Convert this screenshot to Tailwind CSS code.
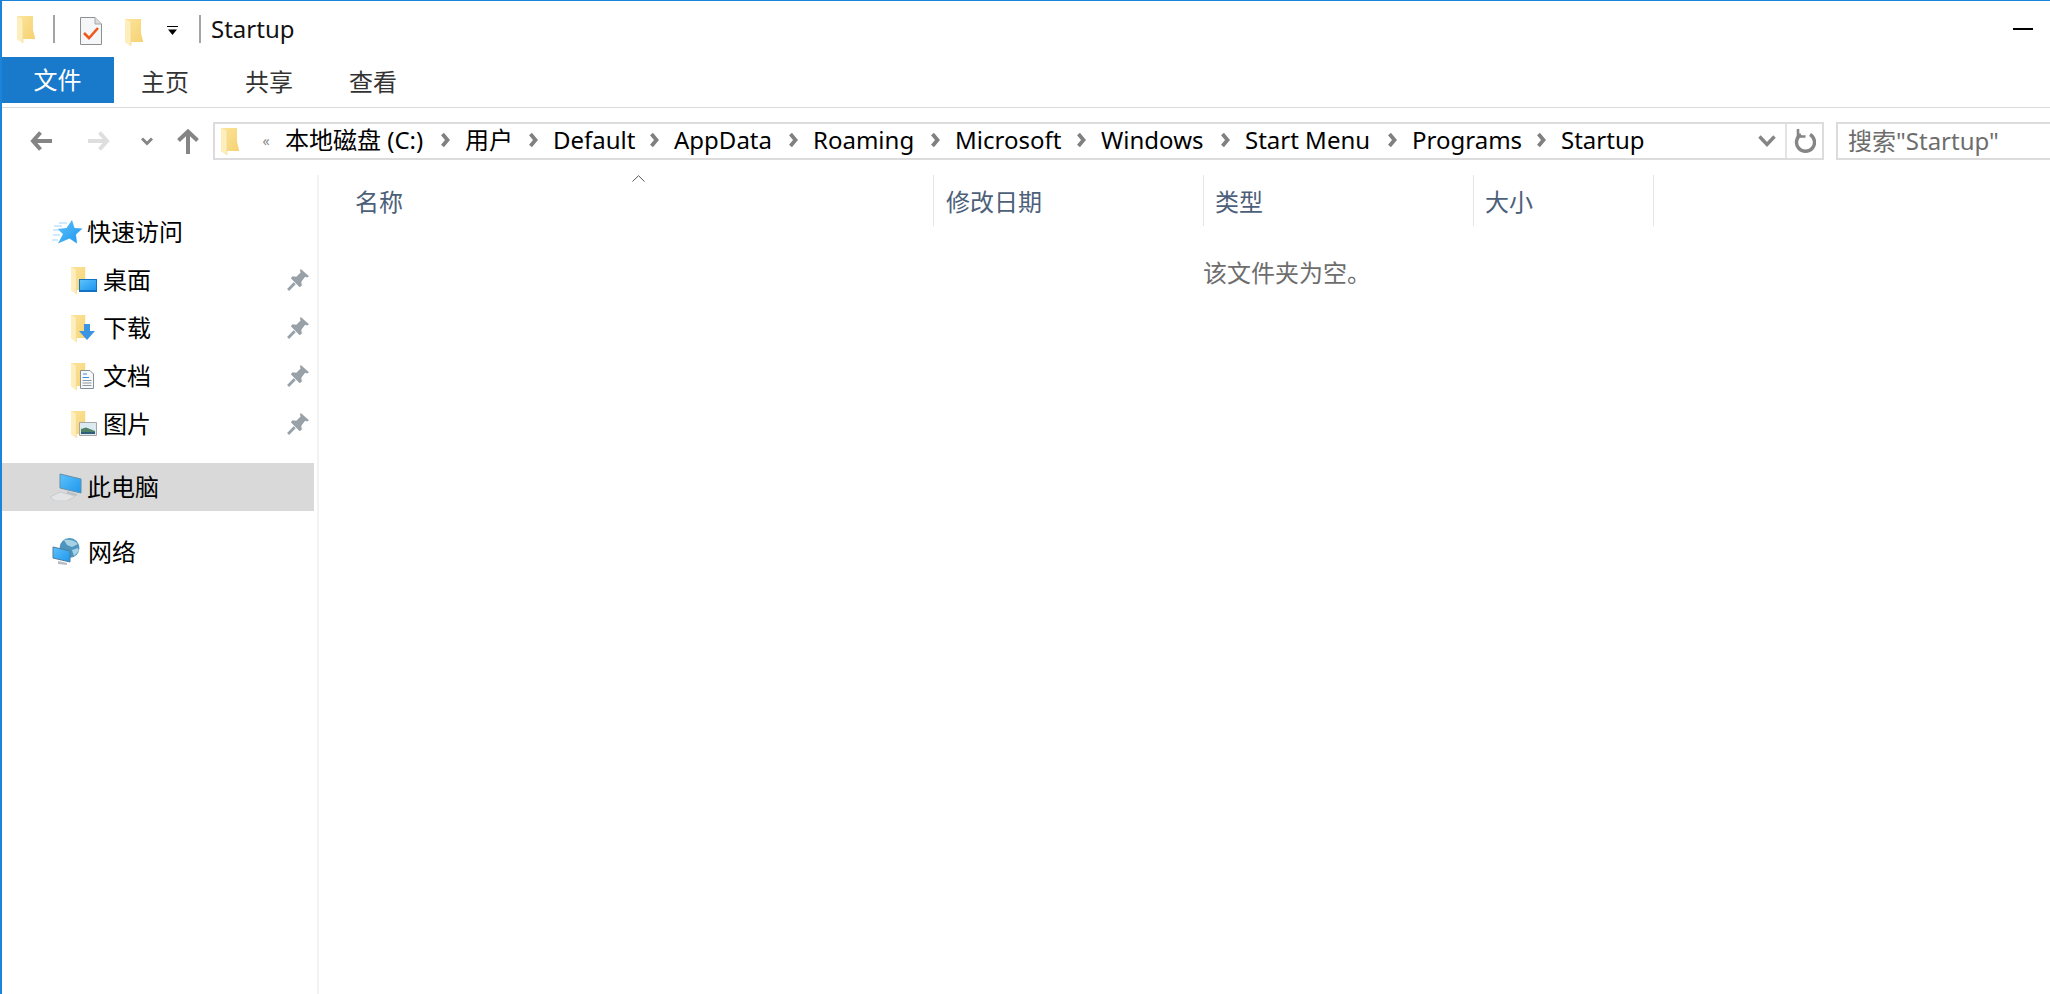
<!DOCTYPE html>
<html lang="zh-CN">
<head>
<meta charset="utf-8">
<script src="https://cdn.jsdelivr.net/npm/@tailwindcss/browser@4"></script>
<title>Startup</title>
</head>
<body class="overflow-hidden bg-white">
<svg class="absolute h-0 w-0" aria-hidden="true">
  <defs>
    <linearGradient id="fg" x1="0" y1="0" x2="1" y2="1"><stop offset="0" stop-color="#fbe59b"/><stop offset="1" stop-color="#f6d06e"/></linearGradient>
    <linearGradient id="bl" x1="0" y1="0" x2="1" y2="1"><stop offset="0" stop-color="#5cc2fb"/><stop offset="1" stop-color="#1f96ee"/></linearGradient>
    <symbol id="folder" viewBox="0 0 18 27" preserveAspectRatio="none">
      <path d="M0 0H16V14L18 22V23H6V27L0 23Z" fill="url(#fg)"/>
      <path d="M0 0L6 3V27L0 23Z" fill="#fdeebb"/>
      <path d="M6 3V27" stroke="#efd68f" stroke-width=".6"/>
    </symbol>
    <symbol id="chev" viewBox="0 0 10 14">
      <path d="M2.5 1L7.5 7L2.5 13" fill="none" stroke="#808080" stroke-width="3.8"/>
    </symbol>
    <symbol id="pin" viewBox="0 0 20 20">
      <path d="M12.5 0L20 6.5L18.3 7.7L16.5 7L13 11.5L13.5 15L11.5 16.5L3.5 8.5L5 6.7L8.5 7L12.5 3L11.7 1.5Z" fill="#98a1a8"/>
      <path d="M7 13L1 19" stroke="#98a1a8" stroke-width="2.6"/>
    </symbol>
  </defs>
</svg>

<div class="flex h-[994px] w-[2050px] flex-col border-l-2 border-t border-[#1b84d8] font-['Noto_Sans','Noto_Sans_CJK_SC',sans-serif] text-[24px] text-black">

  <!-- title bar -->
  <div class="relative flex h-[56px] items-center">
    <svg class="ml-[15px] mb-[-1px] h-[27px] w-[18px]"><use href="#folder"/></svg>
    <div class="ml-[18px] h-[28px] w-[2px] bg-[#a4a4a4]"></div>
    <svg class="ml-[25px] mt-[3px] h-[28px] w-[22px]" viewBox="0 0 22 28">
      <path d="M.5.5H15L21.5 7V27.5H.5Z" fill="#f5f6f7" stroke="#8f8f8f"/>
      <path d="M15 .5V7H21.5" fill="#dcdcdc" stroke="#a8a8a8"/>
      <path d="M4 16L9 21L18 11" fill="none" stroke="#f0591c" stroke-width="2.6"/>
    </svg>
    <svg class="ml-[23px] mt-[6px] h-[27px] w-[18px]"><use href="#folder"/></svg>
    <svg class="ml-[24px] mt-[3px] h-[10px] w-[11px]" viewBox="0 0 11 10">
      <path d="M0 .5H11" stroke="#000"/><path d="M1 3.5H10L5.5 9Z" fill="#000"/>
    </svg>
    <div class="ml-[21px] h-[28px] w-[2px] bg-[#a4a4a4]"></div>
    <span class="ml-[10px] text-[#111]">Startup</span>
    <div class="absolute right-[17px] top-[27px] h-[2px] w-[20px] bg-black"></div>
  </div>

  <!-- ribbon tabs -->
  <div class="flex h-[51px] items-start border-b border-[#dadbdc] text-[#333]">
    <div class="flex h-[46px] w-[112px] items-center justify-center bg-[#1979ca] pr-[1px] text-white">文件</div>
    <div class="flex h-[46px] w-[103px] items-center justify-end pr-[28px] pt-[3px]">主页</div>
    <div class="flex h-[46px] w-[104px] items-center justify-end pr-[28px] pt-[3px]">共享</div>
    <div class="flex h-[46px] w-[104px] items-center justify-end pr-[28px] pt-[3px]">查看</div>
  </div>

  <!-- navigation -->
  <div class="flex h-[67px] items-start pt-[14px]">
    <div class="flex h-[38px] w-[211px] items-center">
      <svg class="ml-[28px] h-[20px] w-[22px]" viewBox="0 0 22 20"><path d="M10.5 1.5L3 10L10.5 18.5M3 10H22" fill="none" stroke="#858585" stroke-width="4"/></svg>
      <svg class="ml-[36px] h-[20px] w-[22px]" viewBox="0 0 22 20"><path d="M11.5 1.5L19 10L11.5 18.5M19 10H0" fill="none" stroke="#dedede" stroke-width="4"/></svg>
      <svg class="ml-[31px] h-[9px] w-[12px]" viewBox="0 0 12 9"><path d="M1 1.5L6 6.5L11 1.5" fill="none" stroke="#858585" stroke-width="3"/></svg>
      <svg class="ml-[24px] h-[25px] w-[22px]" viewBox="0 0 22 25"><path d="M1.5 11.5L11 2.5L20.5 11.5M11 3V25" fill="none" stroke="#858585" stroke-width="4"/></svg>
    </div>
    <div class="flex h-[38px] w-[1611px] items-center border-2 border-[#dcdcdc]">
      <svg class="ml-[6px] h-[27px] w-[18px] shrink-0"><use href="#folder"/></svg>
      <span class="ml-[23px] flex w-[8px] shrink-0 justify-center text-[14px] leading-none text-[#888]">«</span>
      <div class="mb-[2px] ml-[15px] flex shrink-0 items-center leading-[34px]">
        <span class="flex w-[180px] items-center justify-between pr-[15px]">本地磁盘 (C:)<svg class="h-[14px] w-[10px]"><use href="#chev"/></svg></span>
        <span class="flex w-[88px] items-center justify-between pr-[15px]">用户<svg class="h-[14px] w-[10px]"><use href="#chev"/></svg></span>
        <span class="flex w-[121px] items-center justify-between pr-[15px]">Default<svg class="h-[14px] w-[10px]"><use href="#chev"/></svg></span>
        <span class="flex w-[139px] items-center justify-between pr-[15px]">AppData<svg class="h-[14px] w-[10px]"><use href="#chev"/></svg></span>
        <span class="flex w-[142px] items-center justify-between pr-[15px]">Roaming<svg class="h-[14px] w-[10px]"><use href="#chev"/></svg></span>
        <span class="flex w-[146px] items-center justify-between pr-[15px]">Microsoft<svg class="h-[14px] w-[10px]"><use href="#chev"/></svg></span>
        <span class="flex w-[144px] items-center justify-between pr-[15px]">Windows<svg class="h-[14px] w-[10px]"><use href="#chev"/></svg></span>
        <span class="flex w-[167px] items-center justify-between pr-[15px]">Start Menu<svg class="h-[14px] w-[10px]"><use href="#chev"/></svg></span>
        <span class="flex w-[149px] items-center justify-between pr-[15px]">Programs<svg class="h-[14px] w-[10px]"><use href="#chev"/></svg></span>
        <span>Startup</span>
      </div>
      <svg class="ml-auto h-[12px] w-[18px] shrink-0" viewBox="0 0 18 12"><path d="M1.5 1.5L9 9.5L16.5 1.5" fill="none" stroke="#858585" stroke-width="3.4"/></svg>
      <div class="ml-[9px] flex h-full w-[37px] shrink-0 items-center justify-center border-l-2 border-[#e3e3e3]">
        <svg class="h-[26px] w-[22px]" viewBox="0 0 22 26"><path d="M7 6.5A9 9 0 1 0 16 6.5" fill="none" stroke="#858585" stroke-width="3.4"/><path d="M4 1V8.5H11.5" fill="none" stroke="#858585" stroke-width="2.6"/></svg>
      </div>
    </div>
    <div class="ml-[12px] flex h-[38px] flex-1 items-center border-y-2 border-l-2 border-[#dcdcdc] pl-[10px] text-[#6d6d6d]">搜索"Startup"</div>
  </div>

  <!-- body -->
  <div class="flex min-h-0 flex-1">
    <!-- navigation pane -->
    <aside class="w-[317px] shrink-0 border-r-2 border-[#f2f2f2] pt-[33px]">
      <div class="flex h-[48px] items-center">
        <svg class="ml-[50px] mt-[-1px] h-[24px] w-[31px]" viewBox="0 0 31 24">
          <path d="M20 0L22.5 8L30.5 8.5L24 14.5L25 23.5L17.5 18.5L6 23.5L11 14L5.5 9L14.5 8Z" fill="url(#bl)"/>
          <path d="M7 3H15M2 6H10M1 10H6M1 15H8M0 20H6" stroke="#9ed6fa" stroke-width="1"/>
        </svg>
        <span class="ml-[4px]">快速访问</span>
      </div>

      <div class="flex h-[48px] items-center">
        <div class="relative ml-[69px] h-[27px] w-[32px]">
          <svg class="h-[27px] w-[16px]"><use href="#folder"/></svg>
          <svg class="absolute left-[8px] top-[12px] h-[13px] w-[18px]" viewBox="0 0 18 13"><path d="M0 0H18V13H0Z" fill="#1272c4"/><path d="M1 1H17V11H1Z" fill="url(#bl)"/></svg>
        </div>
        <span>桌面</span>
        <svg class="ml-auto mr-[8px] h-[22px] w-[22px]"><use href="#pin"/></svg>
      </div>
      <div class="flex h-[48px] items-center">
        <div class="relative ml-[69px] h-[27px] w-[32px]">
          <svg class="h-[27px] w-[16px]"><use href="#folder"/></svg>
          <svg class="absolute left-[8px] top-[9px] h-[16px] w-[16px]" viewBox="0 0 16 16"><path d="M5 0H11V7H16L8 16L0 7H5Z" fill="#3c95e2"/></svg>
        </div>
        <span>下载</span>
        <svg class="ml-auto mr-[8px] h-[22px] w-[22px]"><use href="#pin"/></svg>
      </div>
      <div class="flex h-[48px] items-center">
        <div class="relative ml-[69px] h-[27px] w-[32px]">
          <svg class="h-[27px] w-[16px]"><use href="#folder"/></svg>
          <svg class="absolute left-[9px] top-[7px] h-[19px] w-[14px]" viewBox="0 0 14 19">
            <path d="M.5.5H10L13.5 4V18.5H.5Z" fill="#f7f8f9" stroke="#858e96"/>
            <path d="M3 4H7M2.5 7.5H9" stroke="#3b8fd9"/>
            <path d="M2.5 10.5H11.5M2.5 13H11.5M2.5 15.5H11.5" stroke="#8e98a1"/>
          </svg>
        </div>
        <span>文档</span>
        <svg class="ml-auto mr-[8px] h-[22px] w-[22px]"><use href="#pin"/></svg>
      </div>
      <div class="flex h-[48px] items-center">
        <div class="relative ml-[69px] h-[27px] w-[32px]">
          <svg class="h-[27px] w-[16px]"><use href="#folder"/></svg>
          <svg class="absolute left-[8px] top-[11px] h-[14px] w-[18px]" viewBox="0 0 18 14">
            <path d="M.5.5H17.5V13.5H.5Z" fill="#dcebf2" stroke="#a6a6a6"/>
            <path d="M2 7L7 5.5L16 9V12H2Z" fill="#4f8266"/>
            <path d="M2 10H16V12H2Z" fill="#2f5f78"/>
          </svg>
        </div>
        <span>图片</span>
        <svg class="ml-auto mr-[8px] h-[22px] w-[22px]"><use href="#pin"/></svg>
      </div>

      <div class="mr-[3px] mt-[15px] flex h-[48px] items-center bg-[#d9d9d9]">
        <svg class="ml-[48px] h-[28px] w-[32px]" viewBox="0 0 32 28">
          <path d="M10 1L31 6V20L10 15Z" fill="url(#bl)" stroke="#5f8fae"/>
          <path d="M17 18L27 21V23L17 21Z" fill="#b9c2c8"/>
          <path d="M0 24L10 19L25 23L17 28H5Z" fill="#e2e4e6" stroke="#bdbdbd" stroke-width=".6"/>
        </svg>
        <span class="ml-[5px]">此电脑</span>
      </div>

      <div class="mt-[17px] flex h-[48px] items-center">
        <svg class="ml-[50px] h-[28px] w-[29px]" viewBox="0 0 29 28">
          <circle cx="17.5" cy="10" r="10" fill="#4d95bd"/>
          <path d="M12 2C17 1 23 2 26 6L20 9L15 7ZM20 12L26 10L27 13L22 18Z" fill="#a7d2e6"/>
          <path d="M1 9L18 13V24L1 20Z" fill="url(#bl)" stroke="#4c7d9c"/>
          <path d="M6 23L15 25V27L6 26Z" fill="#b7bcc0"/>
        </svg>
        <span class="ml-[7px]">网络</span>
      </div>
    </aside>

    <!-- file list -->
    <main class="min-w-0 flex-1">
      <div class="relative flex h-[51px] text-[#4c607a]">
        <svg class="absolute left-[313px] top-[0px] h-[7px] w-[13px]" viewBox="0 0 13 7"><path d="M.5 6.5L6.5 .7L12.5 6.5" fill="none" stroke="#555"/></svg>
        <div class="flex w-[615px] items-center border-r border-[#e5e5e5] pl-[36px] pt-[2px]">名称</div>
        <div class="flex w-[270px] items-center border-r border-[#e5e5e5] pl-[12px] pt-[2px]">修改日期</div>
        <div class="flex w-[270px] items-center border-r border-[#e5e5e5] pl-[11px] pt-[2px]">类型</div>
        <div class="flex w-[180px] items-center border-r border-[#e5e5e5] pl-[11px] pt-[2px]">大小</div>
      </div>
      <p class="mt-[31px] pl-[884px] leading-[32px] text-[#6d6d6d]">该文件夹为空。</p>
    </main>
  </div>
</div>
</body>
</html>
